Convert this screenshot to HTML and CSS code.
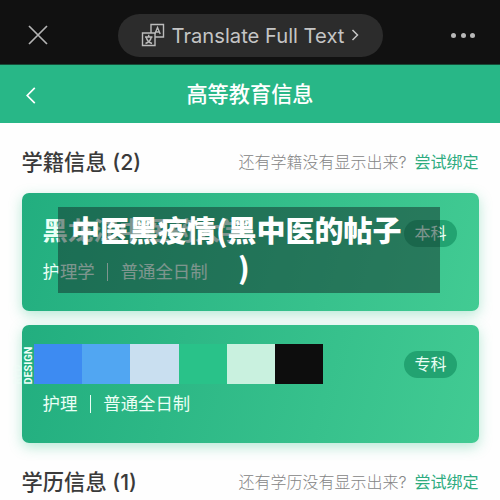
FILE: index.html
```html
<!DOCTYPE html>
<html lang="zh-CN">
<head>
<meta charset="utf-8">
<title>高等教育信息</title>
<link rel="stylesheet" href="styles.css">
</head>
<body>
<div class="topbar">
  <svg class="close" viewBox="0 0 20 20"><path d="M1 1 19 19M19 1 1 19"/></svg>
  <div class="translate">
    <svg class="lang" viewBox="0 0 24 24"><path d="M10 10V1.500H22.500V14H14M1.500 10H14V22.500H1.500Z"/><path d="M13.800 11 16.500 4.500 19.200 11M14.800 9H18.200M7.700 11.800V13.600M4 14H11.500M5.300 14.500C6 17.500 8 19.500 11 20.500M10.200 14.500C9.500 17.500 7.500 19.500 4.500 20.500"/></svg>
    <span>Translate Full Text</span>
    <svg class="arrow" viewBox="0 0 8 12"><path d="M1.500 1 6.500 6 1.500 11"/></svg>
  </div>
  <div class="more"><i></i><i></i><i></i></div>
</div>
<header class="nav">
  <svg class="back" viewBox="0 0 10 18"><path d="M9 1 1 9 9 17"/></svg>
  <h1>高等教育信息</h1>
</header>
<main>
  <section class="heading">
    <h2>学籍信息 (2)</h2>
    <p>还有学籍没有显示出来?<a>尝试绑定</a></p>
  </section>
  <article class="card">
    <div class="school">黑龙江中医药大学</div>
    <div class="major">护理学<b></b>普通全日制</div>
    <span class="level">本科</span>
    <div class="caption"><div>中医黑疫情(黑中医的帖子<br><span>)</span></div></div>
  </article>
  <article class="card second">
    <div class="palette">
      <div class="side"><span class="ghost">RED</span><span>DESIGN</span></div>
      <i class="c1"></i><i class="c2"></i><i class="c3"></i><i class="c4"></i><i class="c5"></i><i class="c6"></i>
    </div>
    <div class="major">护理<b></b>普通全日制</div>
    <span class="level">专科</span>
  </article>
  <section class="heading last">
    <h2>学历信息 (1)</h2>
    <p>还有学历没有显示出来?<a>尝试绑定</a></p>
  </section>
</main>
</body>
</html>
```
FILE: styles.css
```css
* { box-sizing: border-box; }
body {
  margin: 0;
  width: 500px;
  height: 500px;
  overflow: hidden;
  background: #fefefe;
  font-family: Inter, "Noto Sans CJK SC", sans-serif;
}
h1, h2, p { margin: 0; font-weight: 400; white-space: nowrap; }
svg { fill: none; display: block; }
.topbar {
  height: 65px;
  padding: 6px 25px 0 28px;
  background: #111;
  border-bottom: 1px solid #174d39;
  display: flex;
  align-items: center;
  justify-content: space-between;
}
.close { width: 20px; height: 20px; stroke: #b4b4b4; stroke-width: 1.7; }
.translate {
  width: 265px;
  height: 43px;
  margin-left: 1px;
  padding-left: 23px;
  border-radius: 22px;
  background: #2c2c2c;
  color: #c5c5c5;
  font: 20.200px/43px Inter, sans-serif;
  display: flex;
  align-items: center;
  white-space: nowrap;
}
.lang { width: 24px; height: 24px; margin-right: 7px; stroke: #bcbcbc; stroke-width: 1.4; }
.arrow { width: 8px; height: 12px; margin-left: 7px; stroke: #c5c5c5; stroke-width: 1.5; }
.more { display: flex; gap: 4.500px; }
.more i { width: 5px; height: 5px; border-radius: 50%; background: #b8b8b8; }
.nav {
  height: 57.500px;
  background: #28b787;
  color: #fff;
  display: grid;
  grid-template-columns: 26px 10px 1fr 36px;
  align-items: center;
}
.back { grid-column: 2; width: 10px; height: 17px; margin-top: 4px; stroke: #fff; stroke-width: 1.8; }
.nav h1 { font-size: 21.200px; line-height: 30px; font-weight: 500; text-align: center; }
main { padding: 0 21.500px; }
.heading {
  height: 70.500px;
  padding-top: 9px;
  display: flex;
  align-items: center;
  justify-content: space-between;
}
.heading h2 { font-size: 21.300px; line-height: 30px; font-weight: 500; color: #3a3a3a; }
.heading p { font-size: 16px; line-height: 24px; font-weight: 300; color: #858585; }
.heading a { margin-left: 8px; font-weight: 400; color: #2dab7e; }
.card {
  position: relative;
  height: 118px;
  padding: 22px 21px;
  border-radius: 7px;
  background: linear-gradient(105deg, #22ae7f, #42cb93);
  box-shadow: 0 4px 13px rgba(45, 190, 135, .34);
  color: #eafff5;
}
.second { margin-top: 13.500px; padding-top: 19px; }
.school { height: 32px; font-size: 25.400px; line-height: 32px; font-weight: 700; }
.major {
  display: flex;
  align-items: center;
  margin-top: 12px;
  font-size: 17.400px;
  line-height: 26px;
  white-space: nowrap;
}
.major b { width: 1px; height: 18px; margin: 0 12.500px; background: currentColor; }
.second .major { margin-top: 7px; }
.level {
  position: absolute;
  top: 26.500px;
  right: 21.500px;
  width: 53px;
  height: 27px;
  border-radius: 14px;
  background: #22a371;
  font-size: 16px;
  line-height: 27px;
  text-align: center;
}
.caption {
  position: absolute;
  left: 36.500px;
  top: 14px;
  width: 382px;
  height: 86px;
  background: rgba(18, 43, 40, .5);
}
.caption div {
  padding: 4px 0 0 13px;
  color: #fff;
  font: 900 29px/37px "Noto Sans CJK SC", sans-serif;
  white-space: nowrap;
}
.caption span { margin-left: 167px; }
.palette { display: flex; height: 40.500px; margin-left: -31px; }
.palette i { width: 48.200px; flex: none; }
.side {
  width: 22.500px;
  color: #f0fff8;
  font: 700 10.800px/11px Roboto, sans-serif;
  writing-mode: vertical-rl;
  transform: rotate(180deg);
  white-space: nowrap;
}
.side span { display: block; }
.ghost { opacity: .45; }
.c1 { background: #3d8bf2; }
.c2 { background: #51a6f2; }
.c3 { background: #c9dff0; }
.c4 { background: #29c289; }
.c5 { background: #c9f1df; }
.c6 { background: #0d0d0d; }
.last { height: 60px; padding-top: 19px; }
```
